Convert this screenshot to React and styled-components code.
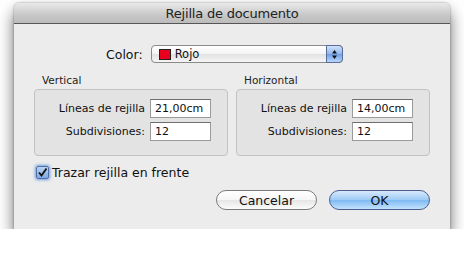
import React from 'react';
import styled, { createGlobalStyle } from 'styled-components';

const Global = createGlobalStyle`
  html, body { margin: 0; padding: 0; background: #fff; }
  body { font-family: "DejaVu Sans", "Liberation Sans", sans-serif; }
`;

const Window = styled.div`
  margin: 3px 0 0 14px;
  width: 436px;
  height: 226px;
  background: #ececec;
  border-radius: 5px 5px 0 0;
  box-shadow: 0 9px 16px rgba(0, 0, 0, 0.6), 0 0 2px rgba(0, 0, 0, 0.45);
  display: flex;
  flex-direction: column;
  overflow: hidden;
`;

const TitleBar = styled.div`
  height: 20px;
  background: linear-gradient(#e9e9e9, #c8c8c8 60%, #bcbcbc);
  border-bottom: 1px solid #565656;
  display: flex;
  align-items: center;
  justify-content: center;
  font-size: 13px;
  color: #222;
  letter-spacing: -0.2px;
`;

const Body = styled.div`
  flex: 1;
  display: flex;
  flex-direction: column;
  padding: 21px 20px 0 20px;
`;

const ColorRow = styled.div`
  display: flex;
  align-items: center;
  height: 18px;
  padding-left: 72px;
  gap: 8px;
  font-size: 12.5px;
  color: #111;
`;

const Popup = styled.div`
  position: relative;
  width: 183px;
  height: 16px;
  border: 1px solid #8a8a8a;
  border-radius: 4px;
  background: linear-gradient(#ffffff, #f4f4f4 50%, #e2e2e2 51%, #f5f5f5);
  display: flex;
  align-items: center;
  padding-left: 7px;
  font-size: 11.5px;
  color: #111;
  box-sizing: content-box;
`;

const Swatch = styled.span`
  width: 12px;
  height: 11px;
  background: ${p => p.color};
  border: 1px solid #222;
  margin-right: 4px;
  box-sizing: border-box;
`;

const Stepper = styled.div`
  position: absolute;
  right: -1px;
  top: -1px;
  bottom: -1px;
  width: 17px;
  border-radius: 0 4px 4px 0;
  border: 1px solid #5a6c9a;
  background: linear-gradient(#cfe2fb, #8fb6ec 50%, #6d9ee6 51%, #b9d6fb);
  display: flex;
  align-items: center;
  justify-content: center;
  box-sizing: border-box;
`;

const Groups = styled.div`
  display: flex;
  gap: 8px;
  margin-top: 10px;
`;

const Group = styled.div`
  display: flex;
  flex-direction: column;
  width: 194px;
`;

const GroupTitle = styled.div`
  font-size: 10.5px;
  color: #222;
  padding-left: 8px;
  height: 16px;
  line-height: 14px;
`;

const GroupBox = styled.div`
  height: 67px;
  border: 1px solid #c2c2c2;
  border-radius: 4px;
  background: #e3e3e3;
  box-sizing: border-box;
  display: grid;
  grid-template-columns: 1fr 61px;
  align-content: start;
  column-gap: 5px;
  row-gap: 4px;
  padding: 9px 16px 0 0;
`;

const FieldLabel = styled.div`
  font-size: 11px;
  color: #111;
  text-align: right;
  align-self: center;
`;

const Field = styled.div`
  height: 19px;
  box-sizing: border-box;
  background: #fff;
  border: 1px solid #9a9a9a;
  border-top-color: #6e6e6e;
  font-size: 11px;
  color: #111;
  padding: 2px 0 0 4px;
`;

const CheckRow = styled.div`
  display: flex;
  align-items: center;
  gap: 3px;
  margin-top: 9px;
  margin-left: 2px;
  font-size: 12.5px;
  color: #111;
`;

const Check = styled.span`
  width: 13px;
  height: 13px;
  border-radius: 2px;
  border: 1px solid #4e6fa8;
  background: linear-gradient(#bcd3f3, #7fa8e4);
  box-shadow: 0 0 3px 1px rgba(70, 130, 220, 0.75);
  display: flex;
  align-items: center;
  justify-content: center;
  box-sizing: border-box;
`;

const Buttons = styled.div`
  display: flex;
  justify-content: flex-end;
  gap: 12px;
  margin-top: 10px;
`;

const Button = styled.div`
  width: 101px;
  height: 20px;
  box-sizing: border-box;
  border-radius: 10px;
  border: 1px solid ${p => (p.primary ? '#4a5d8c' : '#7a7a7a')};
  background: ${p =>
    p.primary
      ? 'linear-gradient(#d7e9fd, #9ccaf6 50%, #7db9f3 51%, #c3e3fd)'
      : 'linear-gradient(#ffffff, #f6f6f6 50%, #e6e6e6 51%, #fbfbfb)'};
  display: flex;
  align-items: center;
  justify-content: center;
  font-size: 12.5px;
  color: #111;
`;

export default function App() {
  return (
    <>
      <Global />
      <Window>
        <TitleBar>Rejilla de documento</TitleBar>
        <Body>
          <ColorRow>
            <span>Color:</span>
            <Popup>
              <Swatch color="#e8001c" />
              Rojo
              <Stepper>
                <svg width="7" height="11" viewBox="0 0 7 11">
                  <path d="M3.5 1 L6 4.5 L1 4.5 Z" fill="#111" />
                  <path d="M3.5 10 L6 6.5 L1 6.5 Z" fill="#111" />
                </svg>
              </Stepper>
            </Popup>
          </ColorRow>
          <Groups>
            <Group>
              <GroupTitle>Vertical</GroupTitle>
              <GroupBox>
                <FieldLabel>Líneas de rejilla</FieldLabel>
                <Field>21,00cm</Field>
                <FieldLabel>Subdivisiones:</FieldLabel>
                <Field>12</Field>
              </GroupBox>
            </Group>
            <Group>
              <GroupTitle>Horizontal</GroupTitle>
              <GroupBox>
                <FieldLabel>Líneas de rejilla</FieldLabel>
                <Field>14,00cm</Field>
                <FieldLabel>Subdivisiones:</FieldLabel>
                <Field>12</Field>
              </GroupBox>
            </Group>
          </Groups>
          <CheckRow>
            <Check>
              <svg width="11" height="11" viewBox="0 0 11 11">
                <path d="M2 5.5 L4.5 8.5 L9.5 1.5" stroke="#111" strokeWidth="1.8" fill="none" />
              </svg>
            </Check>
            Trazar rejilla en frente
          </CheckRow>
          <Buttons>
            <Button>Cancelar</Button>
            <Button primary>OK</Button>
          </Buttons>
        </Body>
      </Window>
    </>
  );
}
